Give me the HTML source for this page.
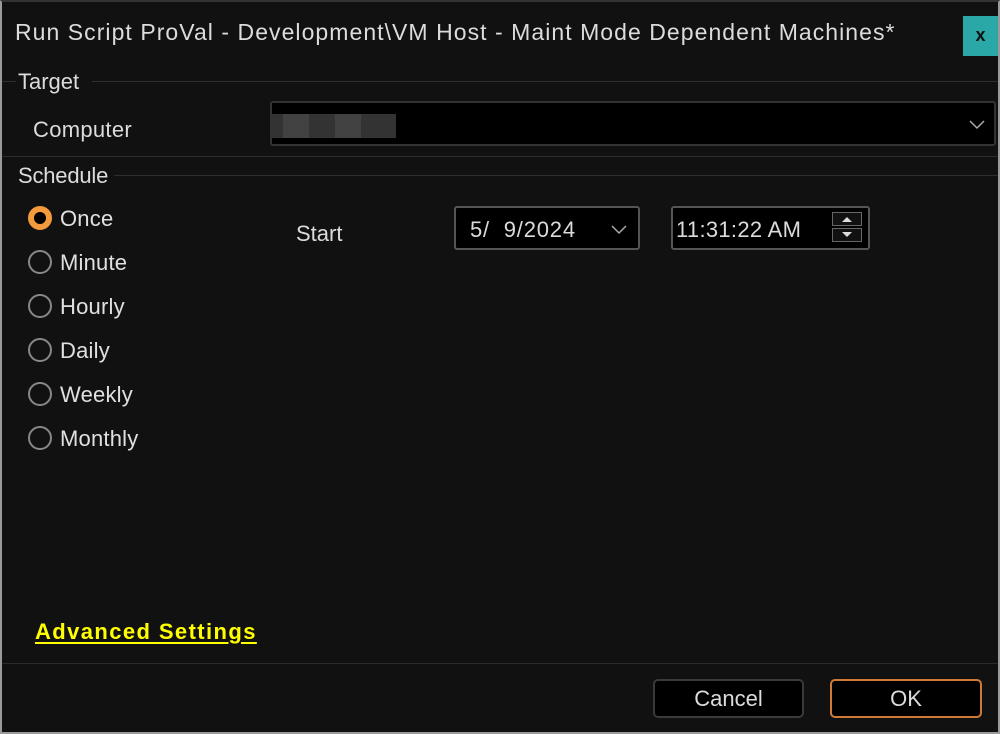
<!DOCTYPE html>
<html><head><meta charset="utf-8"><style>
*{margin:0;padding:0;box-sizing:border-box}
body{width:1000px;height:734px;background:#111;font-family:"Liberation Sans",sans-serif;color:#e6e6e6;position:relative;overflow:hidden}
.frame{position:absolute;left:0;top:0;width:1000px;height:734px;border:2px solid #9a9a9a;border-top-color:#333}
.a{position:absolute;white-space:nowrap}
.t{font-size:22px;color:#dcdcdc}
.line{position:absolute;height:1px;background:#2e2e2e}
.radio{position:absolute;left:28px;width:24px;height:24px;border:2px solid #888;border-radius:50%}
.rl{position:absolute;left:60px;font-size:22px;color:#e0e0e0;letter-spacing:0.2px}
.box{position:absolute;background:#000;border:2px solid #3c3c3c;border-radius:3px}
</style></head><body>
<div class="frame"></div>
<div class="a t" style="left:15px;top:19px;font-size:23px;letter-spacing:1.05px">Run Script ProVal - Development\VM Host - Maint Mode Dependent Machines*</div>
<div class="a" style="left:963px;top:16px;width:35px;height:40px;background:#2aa7a7;color:#111;font-weight:bold;font-size:18px;text-align:center;line-height:38px">x</div>

<div class="a t" style="left:18px;top:69px">Target</div>
<div class="line" style="left:92px;top:81px;width:906px"></div>
<div class="line" style="left:2px;top:81px;width:14px"></div>
<div class="a t" style="left:33px;top:117px;letter-spacing:0.3px">Computer</div>
<div class="box" style="left:270px;top:101px;width:726px;height:45px;border-color:#333"></div>
<div class="a" style="left:272px;top:114px;width:124px;height:24px;background:#333"></div>
<div class="a" style="left:283px;top:114px;width:26px;height:24px;background:#424242"></div>
<div class="a" style="left:335px;top:114px;width:26px;height:24px;background:#424242"></div>
<svg class="a" style="left:968px;top:118px" width="18" height="12"><path d="M2 3 L9 10 L16 3" stroke="#aaa" stroke-width="1.5" fill="none"/></svg>

<div class="line" style="left:2px;top:156px;width:996px"></div>
<div class="a t" style="left:18px;top:163px;letter-spacing:-0.2px">Schedule</div>
<div class="line" style="left:114px;top:175px;width:884px"></div>

<div class="radio" style="top:206px;border-color:#f29a3c;border-width:6px;background:#000"></div>
<div class="rl" style="top:206px">Once</div>
<div class="radio" style="top:250px"></div><div class="rl" style="top:250px">Minute</div>
<div class="radio" style="top:294px"></div><div class="rl" style="top:294px">Hourly</div>
<div class="radio" style="top:338px"></div><div class="rl" style="top:338px">Daily</div>
<div class="radio" style="top:382px"></div><div class="rl" style="top:382px">Weekly</div>
<div class="radio" style="top:426px"></div><div class="rl" style="top:426px">Monthly</div>

<div class="a t" style="left:296px;top:221px">Start</div>
<div class="box" style="left:454px;top:206px;width:186px;height:44px;border-color:#555"></div>
<div class="a t" style="left:470px;top:217px;letter-spacing:0.8px">5/&nbsp; 9/2024</div>
<svg class="a" style="left:610px;top:223px" width="18" height="12"><path d="M2 3 L9 10 L16 3" stroke="#aaa" stroke-width="1.5" fill="none"/></svg>
<div class="box" style="left:671px;top:206px;width:199px;height:44px;border-color:#555"></div>
<div class="a t" style="left:676px;top:217px;letter-spacing:0.3px">11:31:22 AM</div>
<div class="a" style="left:832px;top:212px;width:30px;height:14px;border:1px solid #666;background:#111"></div>
<div class="a" style="left:832px;top:228px;width:30px;height:14px;border:1px solid #666;background:#111"></div>
<svg class="a" style="left:832px;top:212px" width="30" height="30"><path d="M10 10 L20 10 L15 5Z M10 20 L20 20 L15 25Z" fill="#ddd"/></svg>

<div class="a" style="left:35px;top:619px;font-size:22px;color:#ffff00;text-decoration:underline;text-underline-offset:3px;font-weight:bold;letter-spacing:1.4px">Advanced Settings</div>
<div class="line" style="left:2px;top:663px;width:996px;background:#2a2a2a"></div>
<div class="box" style="left:653px;top:679px;width:151px;height:39px;border-color:#3a3a3a;border-radius:5px"></div>
<div class="a t" style="left:653px;top:686px;width:151px;text-align:center">Cancel</div>
<div class="box" style="left:830px;top:679px;width:152px;height:39px;border-color:#d07a36;border-radius:5px"></div>
<div class="a t" style="left:830px;top:686px;width:152px;text-align:center">OK</div>
</body></html>
